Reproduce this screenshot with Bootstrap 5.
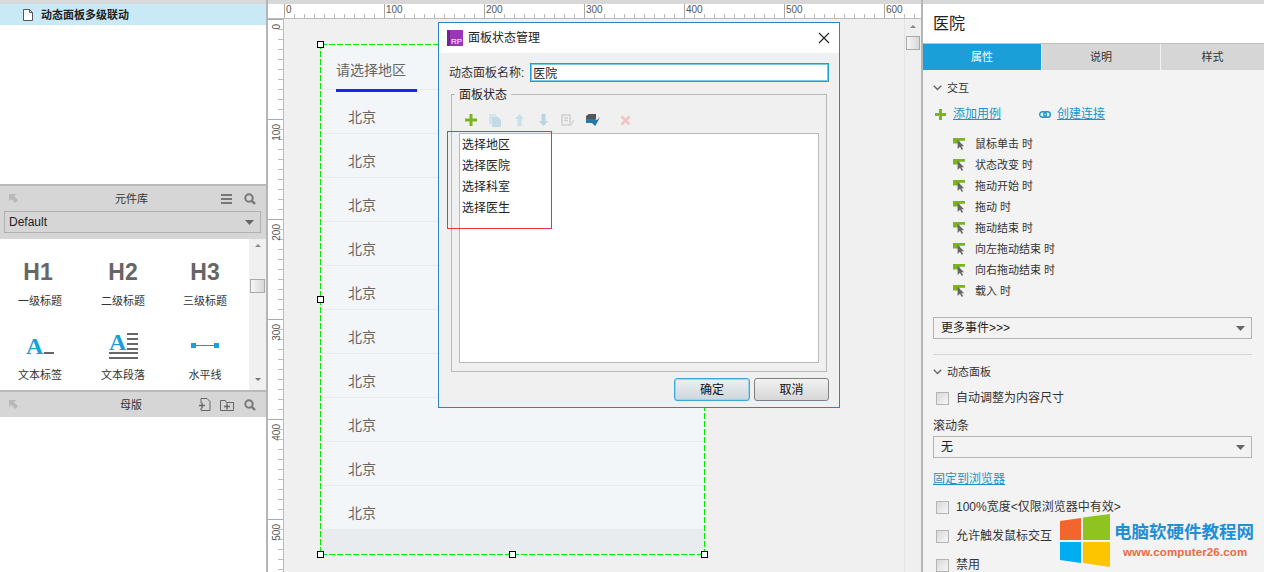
<!DOCTYPE html>
<html lang="zh-CN">

<head>
  <meta charset="UTF-8">
  <meta name="viewport" content="width=device-width, initial-scale=1.0">
  <title>面板状态管理</title>
  <link href="https://cdn.jsdelivr.net/npm/bootstrap@5.3.0/dist/css/bootstrap.min.css" rel="stylesheet">
  <style>
    html, body { height: 572px; overflow: hidden; }
    body {
      font-family: "Liberation Sans", "Noto Sans CJK SC", sans-serif;
      font-size: 12px;
      line-height: 14px;
      color: #333;
      background: #f0f0f0;
    }
    a { color: #1b93c7; }

    /* left column */
    .pane-left { width: 268px; height: 572px; border-right: 2px solid #b5b5b5; background: #fff; flex: none; }
    .pane-left > *, .pane-mid > *, .pane-right > * { flex-shrink: 0; }
    .top-strip { height: 4px; background: #d8d8d8; }
    .page-row { height: 21px; background: #c9e9f6; padding-left: 23px; font-size: 11px; font-weight: 700; color: #222; gap: 8px; }
    .page-blank { height: 159px; }
    .side-head { height: 27px; background: #d6d6d6; border-top: 2px solid #b9b9b9; padding: 0 10px 0 9px; color: #333; font-size: 11px; }
    .side-head .head-title { flex: 1; text-align: center; }
    .side-head .title-lib { padding-left: 24px; }
    .side-head .title-master { padding-left: 46px; }
    .gap-r9 { margin-right: 9px; }
    .gap-r10 { margin-right: 10px; }
    .gap-r12 { margin-right: 12px; }
    .lib-pick { background: #d6d6d6; padding: 0 5px 6px 4px; }
    .lib-pick .form-select { background-color: #d6d6d6; border-color: #b0b0b0; padding-left: 4px; }
    .form-select {
      height: 22px;
      padding: 0 20px 0 7px;
      font-size: 12px;
      color: #222;
      border-radius: 0;
      border-color: #b4b4b4;
      background-color: #f3f3f3;
      background-size: 9px 5px;
      background-position: right 6px center;
      background-image: url("data:image/svg+xml,%3csvg xmlns='http://www.w3.org/2000/svg' viewBox='0 0 9 5'%3e%3cpath fill='%23666' d='M0 0h9L4.500 5z'/%3e%3c/svg%3e");
    }
    .lib-box { height: 151px; }
    .lib-grid { width: 249px; display: grid; grid-template-columns: 80px 86px 78px; grid-template-rows: 74px 76px; padding-top: 19px; }
    .lib-item { text-align: center; font-size: 11px; color: #333; }
    .lib-item .lib-ico { height: 29px; display: flex; align-items: center; justify-content: center; font-size: 23px; font-weight: 700; color: #666; margin-bottom: 7px; line-height: 1; }
    .lib-ico svg { overflow: visible; }
    .lib-scroll { width: 17px; background: #f0f0f0; position: relative; }
    .lib-thumb { width: 15px; height: 14px; margin: 32px 0 0 1px; background: linear-gradient(90deg, #f6f6f6, #d8d8d8); border: 1px solid #aaa; }
    .bar-up, .bar-down { width: 0; height: 0; border-left: 3px solid transparent; border-right: 3px solid transparent; margin-left: 6px; }
    .bar-up { border-bottom: 3px solid #888; margin-top: 5px; }
    .bar-down { border-top: 3px solid #777; margin-top: 85px; }

    /* canvas */
    .pane-mid { width: 653px; height: 572px; flex: none; position: relative; }
    .ruler-top { height: 15px; background: #fff; border-bottom: 1px solid #bbb; padding-left: 16px; overflow: hidden; }
    .ruler-top .tick-run {
      width: 100px; flex: none; height: 14px; border-left: 1px solid #aaa; padding-left: 1px; font-size: 10px; line-height: 11px; color: #555;
      background-image: repeating-linear-gradient(90deg, transparent 0 9px, #bbb 9px 10px);
      background-size: 100% 4px; background-position: 0 bottom; background-repeat: no-repeat;
    }
    .mid-body { flex: 1 1 0; min-height: 0; overflow: hidden; }
    .ruler-left { width: 16px; flex: none; background: #fff; border-right: 1px solid #bbb; overflow: hidden; }
    .ruler-left .tick-run {
      height: 100px; flex: none; border-top: 1px solid #aaa; font-size: 10px; color: #555; line-height: 10px;
      background-image: repeating-linear-gradient(180deg, transparent 0 9px, #bbb 9px 10px);
      background-size: 5px 100%; background-position: right 0; background-repeat: no-repeat;
    }
    .ruler-left .tick-run span { writing-mode: vertical-rl; transform: rotate(180deg); display: block; margin: 4px 0 0 4px; }
    .stage { position: relative; flex: 1; background: #f0f0f0; }
    .canvas-bar { width: 17px; flex: none; background: #efefef; border-left: 1px solid #e4e4e4; }
    .canvas-thumb { width: 14px; height: 14px; margin: 8px 0 0 1px; background: linear-gradient(90deg, #f6f6f6, #d8d8d8); border: 1px solid #aaa; }
    .canvas-bar .bar-up { margin-top: 6px; margin-left: 5px; }

    .drop-panel { position: absolute; left: 37px; top: 25px; width: 384px; height: 510px; background: #e8ecee; font-size: 14px; line-height: 20px; color: #666; }
    .drop-edge { position: absolute; left: 0; top: 0; pointer-events: none; z-index: 1; overflow: visible; }
    .drop-tab { height: 45px; background: #f2f6f9; padding: 16px 0 0 15px; position: relative; }
    .tab-line { position: absolute; left: 15px; top: 45px; width: 81px; height: 3px; background: #2222ee; z-index: 1; }
    .drop-row { height: 44px; background: #f2f6f9; border-top: 1px solid #e6ebef; padding: 17px 0 0 27px; }
    .grip { position: absolute; width: 7px; height: 7px; background: #fff; border: 1px solid #000; transform: translate(-4px, -3px); z-index: 2; }

    /* dialog */
    .state-dialog { position: absolute; left: 170px; top: 22px; width: 402px; height: 386px; background: #f0f0f0; border: 1px solid #2a84c6; z-index: 5; }
    .dlg-title { height: 30px; background: #fff; padding: 0 8px; gap: 5px; color: #222; }
    .dlg-close { width: 14px; height: 14px; margin-left: auto; }
    .dlg-name { padding: 10px 10px 0 10px; gap: 6px; }
    .dlg-name label { white-space: nowrap; }
    .dlg-name .form-control { height: 19px; width: 299px; padding: 0 2px; font-size: 12px; color: #222; border: 1px solid #1a9fd8; border-radius: 0; box-shadow: inset 0 0 0 1px #7cc8e8; background: #fff; }
    .state-field { margin: 4px 12px 0 12px; width: 376px; height: 286px; border: 1px solid #b9b9b9; padding: 0 7px; }
    .state-field legend { float: none; width: auto; font-size: 12px; margin: 0 0 0 -4px; padding: 2px 4px 0; line-height: 14px; color: #222; }
    .tool-row { height: 31px; padding: 5px 0 0 6px; }
    .tool-row svg { flex: none; }
    .state-list { height: 230px; width: 360px; background: #fff; border: 1px solid #b9b9b9; border-radius: 0; padding-top: 1px; }
    .state-list .list-group-item { border: 0; background: none; padding: 0 0 0 2px; height: 21px; line-height: 21px; font-size: 12px; color: #222; }
    .red-mark { position: absolute; left: 8px; top: 108px; width: 105px; height: 98px; border: 1px solid #e8323c; }
    .dlg-foot { padding: 6px 10px 0 0; gap: 4px; justify-content: flex-end; }
    .dlg-btn { width: 75px; height: 23px; padding: 0; font-size: 12px; color: #111; border-radius: 3px; border: 1px solid #808080; background: linear-gradient(#f2f2f2, #d6d6d6); line-height: 20px; }
    .dlg-btn.is-default { border: 1px solid #3ba8d8; box-shadow: inset 0 0 0 1px #9fd2e8; background: linear-gradient(#eaf0f3, #cfd6da); width: 76px; }

    /* right column */
    .pane-right { flex: 1; height: 572px; background: #f3f3f3; border-left: 2px solid #b5b5b5; overflow: hidden; position: relative; }
    .name-head { height: 40px; background: #fff; padding-left: 10px; font-size: 16px; color: #222; border-bottom: 1px solid #c0c0c0; }
    .prop-tabs .nav-link { height: 26px; width: 118px; flex: none; padding: 0; line-height: 26px; font-size: 11px; text-align: center; color: #333; background: #d6d6d6; border-radius: 0; margin-right: 1px; }
    .prop-tabs .nav-link.active { background: #1a9fd8; color: #fff; }
    .prop-tabs .nav-link:last-child { flex: 1; margin: 0; }
    .sect-head { height: 14px; margin-left: 10px; gap: 5px; font-size: 11px; color: #333; }
    .sect-first { margin-top: 11px; }
    .case-links { padding-left: 12px; height: 16px; margin-top: 11px; }
    .case-links a { margin-left: 7px; }
    .case-links .link-glyph { margin-left: 38px; }
    .case-links .link-glyph + a { margin-left: 6px; }
    .event-list { list-style: none; margin: 11px 0 0; padding: 0 0 0 30px; }
    .event-list li { height: 21px; gap: 10px; font-size: 11px; color: #333; }
    .prop-pad { padding: 0 12px 0 10px; }
    .prop-rule { border-top: 1px solid #d4d4d4; margin: 15px 0 10px; }
    .form-check-input.plain-check { width: 13px; height: 13px; margin: 0; flex: none; border-radius: 0; border: 1px solid #b4b4b4; background: linear-gradient(135deg, #d8d8d8, #f7f7f7); }
    .chk-row { padding-left: 13px; gap: 7px; height: 14px; margin-top: 15px; }
    .chk-first { margin-top: 12px; }
    .chk-next { margin-top: 14px; }
    .scroll-block { margin-top: 14px; }
    .scroll-label { margin-bottom: 3px; }
    .pin-link { margin-top: 14px; }

    .logo-mark { position: absolute; left: 137px; top: 514px; }
    .mark-cn { position: absolute; left: 191px; top: 522px; font-size: 17.500px; font-weight: 700; color: #1f8fd6; white-space: nowrap; line-height: 20px; }
    .mark-en { position: absolute; left: 200px; top: 545px; font-size: 11.500px; font-weight: 700; color: #ec6a3c; white-space: nowrap; line-height: 14px; letter-spacing: .15px; }
  </style>
</head>

<body class="d-flex">
  <svg width="0" height="0" class="position-absolute">
    <symbol id="evt" viewBox="0 0 13 13">
      <path d="M0 0h13v3H7v3H0z" fill="#7ab51d"/>
      <path d="M5 2v10l2.500-2.500 2 3.500 1.500-1-2-3h3z" fill="#666"/>
    </symbol>
    <symbol id="find" viewBox="0 0 12 12">
      <circle cx="5" cy="5" r="3.700" fill="none" stroke="#777" stroke-width="2"/>
      <path d="M7.800 7.800L11 11" stroke="#777" stroke-width="2.400"/>
    </symbol>
    <symbol id="corner" viewBox="0 0 10 10">
      <path d="M0 0h8L5.500 2.500 10 7 7 10 2.500 5.500 0 8z" fill="#b8b8b8"/>
    </symbol>
    <symbol id="menu3" viewBox="0 0 11 10">
      <path d="M0 0h11v2H0zM0 4h11v2H0zM0 8h11v2H0z" fill="#777"/>
    </symbol>
  </svg>

  <!-- left -->
  <div class="pane-left d-flex flex-column">
    <div class="top-strip"></div>
    <div class="page-row d-flex align-items-center">
      <svg width="10" height="12" viewBox="0 0 10 12"><path d="M.5.500h6l3 3v8H.500z" fill="#fff" stroke="#555"/><path d="M6.500.500v3h3" fill="none" stroke="#555"/></svg>
      <span>动态面板多级联动</span>
    </div>
    <div class="page-blank"></div>
    <div class="side-head d-flex align-items-center">
      <svg width="9" height="9"><use href="#corner"/></svg>
      <span class="head-title title-lib">元件库</span>
      <svg width="11" height="10" class="gap-r12"><use href="#menu3"/></svg>
      <svg width="12" height="12"><use href="#find"/></svg>
    </div>
    <div class="lib-pick">
      <select class="form-select"><option>Default</option></select>
    </div>
    <div class="lib-box d-flex">
      <div class="lib-grid">
        <div class="lib-item"><div class="lib-ico pe-1">H1</div>一级标题</div>
        <div class="lib-item"><div class="lib-ico">H2</div>二级标题</div>
        <div class="lib-item"><div class="lib-ico">H3</div>三级标题</div>
        <div class="lib-item"><div class="lib-ico">
          <svg width="28" height="29" viewBox="0 0 28 29"><text x="0" y="22" font-family="Liberation Serif" font-weight="700" font-size="24" fill="#1a9fd8">A</text><path d="M18 20h10v2H18z" fill="#666"/></svg>
        </div>文本标签</div>
        <div class="lib-item"><div class="lib-ico">
          <svg width="29" height="29" viewBox="0 0 29 29"><text x="0" y="18" font-family="Liberation Serif" font-weight="700" font-size="24" fill="#1a9fd8">A</text><path d="M18 1h11v2H18zM18 6h11v2H18zM18 11h11v2H18zM18 16h11v2H18zM0 20h29v2H0zM0 25h29v2H0z" fill="#666"/></svg>
        </div>文本段落</div>
        <div class="lib-item"><div class="lib-ico">
          <svg width="28" height="29" viewBox="0 0 28 29"><path d="M3 13.500h22" stroke="#777"/><path d="M0 11h5v5H0zM23 11h5v5h-5z" fill="#1a9fd8"/></svg>
        </div>水平线</div>
      </div>
      <div class="lib-scroll">
        <div class="bar-up"></div>
        <div class="lib-thumb"></div>
        <div class="bar-down"></div>
      </div>
    </div>
    <div class="side-head d-flex align-items-center">
      <svg width="9" height="9"><use href="#corner"/></svg>
      <span class="head-title title-master">母版</span>
      <svg width="13" height="13" viewBox="0 0 13 13" class="gap-r9"><path d="M3 5V.500h6l3 3v9H3V10" fill="none" stroke="#666"/><path d="M1 7.500h6M4 4.500v6" stroke="#666" stroke-width="1.400"/></svg>
      <svg width="14" height="12" viewBox="0 0 14 12" class="gap-r10"><path d="M.5 11.500v-10h5l1 2h7v8z" fill="none" stroke="#666"/><path d="M4 7.500h6M7 4.500v6" stroke="#666" stroke-width="1.400"/></svg>
      <svg width="12" height="12"><use href="#find"/></svg>
    </div>
    <div class="flex-grow-1"></div>
  </div>

  <!-- canvas -->
  <div class="pane-mid d-flex flex-column">
    <div class="top-strip"></div>
    <div class="ruler-top d-flex">
      <div class="tick-run">0</div>
      <div class="tick-run">100</div>
      <div class="tick-run">200</div>
      <div class="tick-run">300</div>
      <div class="tick-run">400</div>
      <div class="tick-run">500</div>
      <div class="tick-run">600</div>
    </div>
    <div class="mid-body d-flex">
      <div class="ruler-left d-flex flex-column">
        <div class="tick-run"><span>0</span></div>
        <div class="tick-run"><span>100</span></div>
        <div class="tick-run"><span>200</span></div>
        <div class="tick-run"><span>300</span></div>
        <div class="tick-run"><span>400</span></div>
        <div class="tick-run"><span>500</span></div>
      </div>
      <div class="stage">
        <div class="drop-panel">
          <div class="drop-tab">请选择地区<div class="tab-line"></div></div>
          <div class="drop-row">北京</div>
          <div class="drop-row">北京</div>
          <div class="drop-row">北京</div>
          <div class="drop-row">北京</div>
          <div class="drop-row">北京</div>
          <div class="drop-row">北京</div>
          <div class="drop-row">北京</div>
          <div class="drop-row">北京</div>
          <div class="drop-row">北京</div>
          <div class="drop-row">北京</div>
          <svg class="drop-edge" width="384" height="510" viewBox="0 0 384 510"><rect x="-.5" y=".5" width="384" height="510" fill="none" stroke="#00f000" stroke-dasharray="6 2" shape-rendering="crispEdges"/></svg>
          <span class="grip" style="left:0;top:0"></span>
          <span class="grip" style="left:0;top:255px"></span>
          <span class="grip" style="left:0;top:510px"></span>
          <span class="grip" style="left:192px;top:510px"></span>
          <span class="grip" style="left:384px;top:510px"></span>
        </div>
      </div>
      <div class="canvas-bar">
        <div class="bar-up"></div>
        <div class="canvas-thumb"></div>
      </div>
    </div>

    <div class="state-dialog">
      <div class="dlg-title d-flex align-items-center">
        <svg width="16" height="16" viewBox="0 0 16 16"><rect width="16" height="16" fill="#9b37b5"/><rect width="3" height="16" fill="#6b2a8c"/><text x="4" y="13.500" font-size="8" fill="#fff" font-family="Liberation Sans">RP</text></svg>
        <span>面板状态管理</span>
        <svg class="dlg-close" viewBox="0 0 14 14"><path d="M2 2l10 10M12 2L2 12" stroke="#222" stroke-width="1.100"/></svg>
      </div>
      <div class="dlg-name d-flex align-items-center">
        <label>动态面板名称:</label>
        <input class="form-control" type="text" value="医院">
      </div>
      <fieldset class="state-field">
        <legend>面板状态</legend>
        <div class="tool-row d-flex align-items-center">
          <svg width="12" height="12" viewBox="0 0 12 12"><path d="M4.500 0h3v4.500H12v3H7.500V12h-3V7.500H0v-3h4.500z" fill="#7ab51d"/></svg>
          <svg width="12" height="13" viewBox="0 0 12 13" style="margin-left:12px"><path d="M0 0h6l2 2v8H0z" fill="#d5e5ec"/><path d="M3 3h6l3 3v7H3z" fill="#c3dbe6"/></svg>
          <svg width="9" height="12" viewBox="0 0 9 12" style="margin-left:14px"><path d="M4.500 0L9 5H6.500v7h-4V5H0z" fill="#c9dfe9"/></svg>
          <svg width="9" height="12" viewBox="0 0 9 12" style="margin-left:15px"><path d="M2.500 0h4v7H9l-4.500 5L0 7h2.500z" fill="#bcd5e2"/></svg>
          <svg width="14" height="13" viewBox="0 0 14 13" style="margin-left:13px"><path d="M1 1h8v10H1z" fill="none" stroke="#cfcfcf" stroke-width="1.500"/><path d="M3 4h4M3 6.500h4" stroke="#cfcfcf" stroke-width="1.400"/><path d="M9 12l4-6" stroke="#d8d8d8" stroke-width="1.500"/></svg>
          <svg width="14" height="12" viewBox="0 0 14 12" style="margin-left:11px"><path d="M0 2l3-2h7v5H0z" fill="#555"/><path d="M0 5h9l2 1 3-3-3 6-2 3-3-3H0z" fill="#2a78a8"/></svg>
          <svg width="11" height="11" viewBox="0 0 11 11" style="margin-left:20px"><path d="M1.500 1.500l8 8M9.500 1.500l-8 8" stroke="#f4c4c4" stroke-width="2.800"/></svg>
        </div>
        <ul class="list-group state-list">
          <li class="list-group-item">选择地区</li>
          <li class="list-group-item">选择医院</li>
          <li class="list-group-item">选择科室</li>
          <li class="list-group-item">选择医生</li>
        </ul>
      </fieldset>
      <div class="dlg-foot d-flex">
        <button class="btn dlg-btn is-default" type="button">确定</button>
        <button class="btn dlg-btn" type="button">取消</button>
      </div>
      <div class="red-mark"></div>
    </div>
  </div>

  <!-- right -->
  <div class="pane-right d-flex flex-column">
    <div class="top-strip"></div>
    <div class="name-head d-flex align-items-center">医院</div>
    <nav class="nav prop-tabs flex-nowrap">
      <a class="nav-link active" href="#">属性</a>
      <a class="nav-link" href="#">说明</a>
      <a class="nav-link" href="#">样式</a>
    </nav>
    <div class="sect-head sect-first d-flex align-items-center">
      <svg width="9" height="6" viewBox="0 0 9 6"><path d="M.8.800L4.500 4.500 8.200.8" fill="none" stroke="#666" stroke-width="1.400"/></svg>
      <span>交互</span>
    </div>
    <div class="case-links d-flex align-items-center">
      <svg width="11" height="11" viewBox="0 0 11 11"><path d="M4 0h3v4h4v3H7v4H4V7H0V4h4z" fill="#7ab51d"/></svg>
      <a href="#">添加用例</a>
      <svg class="link-glyph" width="12" height="7" viewBox="0 0 12 7"><rect x=".7" y=".7" width="6.600" height="5.600" rx="2.800" fill="none" stroke="#1b93c7" stroke-width="1.400"/><rect x="4.700" y=".7" width="6.600" height="5.600" rx="2.800" fill="none" stroke="#1b93c7" stroke-width="1.400"/></svg>
      <a href="#">创建连接</a>
    </div>
    <ul class="event-list">
      <li class="d-flex align-items-center"><svg width="12" height="12"><use href="#evt"/></svg>鼠标单击 时</li>
      <li class="d-flex align-items-center"><svg width="12" height="12"><use href="#evt"/></svg>状态改变 时</li>
      <li class="d-flex align-items-center"><svg width="12" height="12"><use href="#evt"/></svg>拖动开始 时</li>
      <li class="d-flex align-items-center"><svg width="12" height="12"><use href="#evt"/></svg>拖动 时</li>
      <li class="d-flex align-items-center"><svg width="12" height="12"><use href="#evt"/></svg>拖动结束 时</li>
      <li class="d-flex align-items-center"><svg width="12" height="12"><use href="#evt"/></svg>向左拖动结束 时</li>
      <li class="d-flex align-items-center"><svg width="12" height="12"><use href="#evt"/></svg>向右拖动结束 时</li>
      <li class="d-flex align-items-center"><svg width="12" height="12"><use href="#evt"/></svg>载入 时</li>
    </ul>
    <div class="prop-pad mt-3">
      <select class="form-select"><option>更多事件&gt;&gt;&gt;</option></select>
      <div class="prop-rule"></div>
    </div>
    <div class="sect-head d-flex align-items-center">
      <svg width="9" height="6" viewBox="0 0 9 6"><path d="M.8.800L4.500 4.500 8.200.8" fill="none" stroke="#666" stroke-width="1.400"/></svg>
      <span>动态面板</span>
    </div>
    <div class="chk-row chk-first d-flex align-items-center">
      <input class="form-check-input plain-check" type="checkbox"><span>自动调整为内容尺寸</span>
    </div>
    <div class="prop-pad scroll-block">
      <div class="scroll-label">滚动条</div>
      <select class="form-select"><option>无</option></select>
      <a href="#" class="pin-link d-block">固定到浏览器</a>
    </div>
    <div class="chk-row chk-next d-flex align-items-center">
      <input class="form-check-input plain-check" type="checkbox"><span>100%宽度&lt;仅限浏览器中有效&gt;</span>
    </div>
    <div class="chk-row d-flex align-items-center">
      <input class="form-check-input plain-check" type="checkbox"><span>允许触发鼠标交互</span>
    </div>
    <div class="chk-row d-flex align-items-center">
      <input class="form-check-input plain-check" type="checkbox"><span>禁用</span>
    </div>

    <svg class="logo-mark" width="51" height="53" viewBox="0 0 51 53">
      <path d="M0 7l21-3v22H0z" fill="#f2652d"/>
      <path d="M23 3.600L50 0v26H23z" fill="#8fc31f"/>
      <path d="M0 28h21v21L0 46z" fill="#00adef"/>
      <path d="M23 28h27v25l-27-4z" fill="#fdc400"/>
    </svg>
    <div class="mark-cn">电脑软硬件教程网</div>
    <div class="mark-en">www.computer26.com</div>
  </div>
</body>

</html>
